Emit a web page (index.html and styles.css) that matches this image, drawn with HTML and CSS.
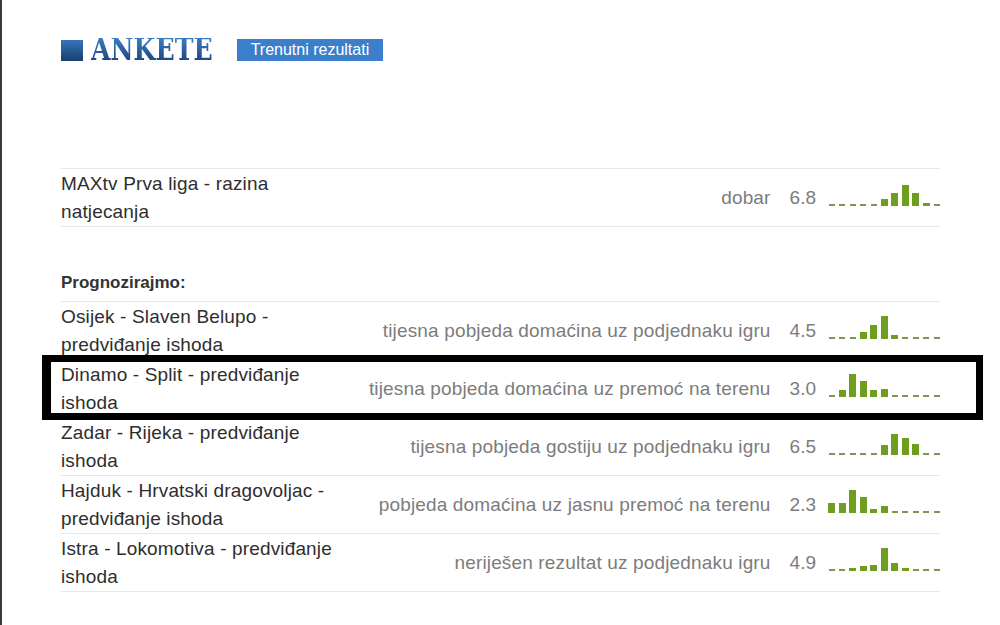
FILE: index.html
```html
<!DOCTYPE html>
<html lang="hr">
<head>
<meta charset="utf-8">
<title>Ankete</title>
<link rel="stylesheet" href="styles.css">
</head>
<body>
<div class="page">
  <div class="content">
    <div class="header">
      <span class="logo-square"></span>
      <h1 class="title">ANKETE</h1>
      <span class="btn">Trenutni rezultati</span>
    </div>

    <div class="poll poll-top">
      <div class="row">
        <div class="name">MAXtv Prva liga - razina natjecanja</div>
        <div class="answer">dobar</div>
        <div class="score">6.8</div>
        <div class="chart">
          <span class="dash"></span><span class="dash"></span><span class="dash"></span><span class="dash"></span><span class="dash"></span><span class="bar" style="height:7px"></span><span class="bar" style="height:13px"></span><span class="bar" style="height:21px"></span><span class="bar" style="height:13px"></span><span class="bar" style="height:3px"></span><span class="dash"></span>
        </div>
      </div>
    </div>

    <div class="group-label">Prognozirajmo:</div>
    <div class="poll">
      <div class="row">
        <div class="name">Osijek - Slaven Belupo - predviđanje ishoda</div>
        <div class="answer">tijesna pobjeda domaćina uz podjednaku igru</div>
        <div class="score">4.5</div>
        <div class="chart">
          <span class="dash"></span><span class="dash"></span><span class="dash"></span><span class="bar" style="height:7px"></span><span class="bar" style="height:14px"></span><span class="bar" style="height:23px"></span><span class="bar" style="height:4px"></span><span class="dash"></span><span class="dash"></span><span class="dash"></span><span class="dash"></span>
        </div>
      </div>
      <div class="row">
        <div class="name">Dinamo - Split - predviđanje ishoda</div>
        <div class="answer">tijesna pobjeda domaćina uz premoć na terenu</div>
        <div class="score">3.0</div>
        <div class="chart">
          <span class="dash"></span><span class="bar" style="height:7px"></span><span class="bar" style="height:23px"></span><span class="bar" style="height:16px"></span><span class="bar" style="height:7px"></span><span class="bar" style="height:8px"></span><span class="dash"></span><span class="dash"></span><span class="dash"></span><span class="dash"></span><span class="dash"></span>
        </div>
        <div class="highlight"></div>
      </div>
      <div class="row">
        <div class="name">Zadar - Rijeka - predviđanje ishoda</div>
        <div class="answer">tijesna pobjeda gostiju uz podjednaku igru</div>
        <div class="score">6.5</div>
        <div class="chart">
          <span class="dash"></span><span class="dash"></span><span class="dash"></span><span class="dash"></span><span class="dash"></span><span class="bar" style="height:10px"></span><span class="bar" style="height:21px"></span><span class="bar" style="height:17px"></span><span class="bar" style="height:11px"></span><span class="dash"></span><span class="dash"></span>
        </div>
      </div>
      <div class="row">
        <div class="name">Hajduk - Hrvatski dragovoljac - predviđanje ishoda</div>
        <div class="answer">pobjeda domaćina uz jasnu premoć na terenu</div>
        <div class="score">2.3</div>
        <div class="chart">
          <span class="bar" style="height:10px"></span><span class="bar" style="height:10px"></span><span class="bar" style="height:23px"></span><span class="bar" style="height:16px"></span><span class="bar" style="height:4px"></span><span class="bar" style="height:7px"></span><span class="dash"></span><span class="dash"></span><span class="dash"></span><span class="dash"></span><span class="dash"></span>
        </div>
      </div>
      <div class="row">
        <div class="name">Istra - Lokomotiva - predviđanje ishoda</div>
        <div class="answer">neriješen rezultat uz podjednaku igru</div>
        <div class="score">4.9</div>
        <div class="chart">
          <span class="dash"></span><span class="dash"></span><span class="bar" style="height:3px"></span><span class="bar" style="height:5px"></span><span class="bar" style="height:6px"></span><span class="bar" style="height:23px"></span><span class="bar" style="height:8px"></span><span class="bar" style="height:3px"></span><span class="dash"></span><span class="dash"></span><span class="dash"></span>
        </div>
      </div>
    </div>
  </div>
</div>
</body>
</html>
```

FILE: styles.css
```css
html, body {
  margin: 0;
  padding: 0;
  background: #ffffff;
}

body {
  font-family: "Liberation Sans", Arial, sans-serif;
  color: #333333;
}

.page {
  box-sizing: border-box;
  min-height: 625px;
  border-left: 2px solid #3a3a3a;
  padding: 39px 0 0 59px;
}

.content {
  width: 879px;
}

.header {
  display: flex;
  align-items: center;
  height: 22px;
}

.logo-square {
  display: block;
  width: 22px;
  height: 21px;
  background: linear-gradient(#3574bb, #17406f);
  margin-right: 8px;
}

.title {
  margin: 0 24px 0 0;
  font-family: "DejaVu Serif Condensed", "DejaVu Serif", "Liberation Serif", serif;
  font-stretch: condensed;
  font-weight: bold;
  font-size: 28px;
  line-height: 22px;
  transform: scaleY(1.12);
  background: linear-gradient(#3a7cc4, #1b467c);
  -webkit-background-clip: text;
  background-clip: text;
  color: transparent;
}

.btn {
  display: block;
  background: #3b7fca;
  color: #ffffff;
  font-size: 16px;
  line-height: 22px;
  padding: 0 14px;
}

.poll {
  border-top: 1px solid #e6e6e6;
}

.poll-top {
  margin-top: 107px;
}

.row {
  position: relative;
  display: flex;
  align-items: center;
  padding-top: 1px;
  border-bottom: 1px solid #e6e6e6;
}

.name {
  width: 280px;
  flex: none;
  font-size: 19px;
  letter-spacing: 0.15px;
  line-height: 28px;
  color: #2e2e2e;
}

.answer {
  flex: 1;
  text-align: right;
  font-size: 19px;
  letter-spacing: 0.15px;
  color: #7c7c7c;
  margin-right: 19px;
}

.score {
  font-size: 19px;
  color: #7c7c7c;
  margin-right: 12px;
}

.chart {
  flex: none;
  width: 112px;
  height: 24px;
  padding-bottom: 8px;
  display: flex;
  justify-content: space-between;
  align-items: flex-end;
}

.bar {
  display: block;
  width: 7px;
  background: #6f9d1d;
}

.dash {
  display: block;
  width: 6px;
  height: 2px;
  margin: 0 0.5px;
  background: #7f944f;
}

.group-label {
  margin-top: 46px;
  padding-bottom: 8px;
  font-size: 17px;
  line-height: 20px;
  font-weight: bold;
  color: #333333;
}

.highlight {
  position: absolute;
  top: -5px;
  bottom: -3px;
  left: -19px;
  right: -43px;
  border: 7px solid #000000;
  border-left-width: 9px;
  pointer-events: none;
}
```
